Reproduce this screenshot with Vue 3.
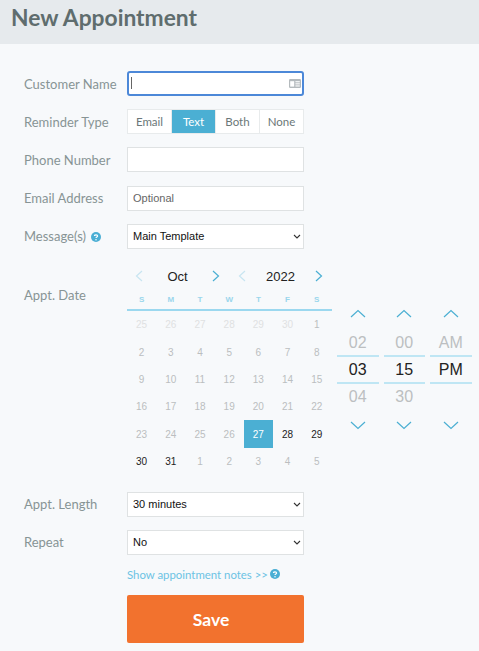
<script setup>
const dows = ['S', 'M', 'T', 'W', 'T', 'F', 'S']

// one flat list, 6 weeks. past = grey, off = next/prev month
const days = [
  [25, 'faint'], [26, 'faint'], [27, 'faint'], [28, 'faint'], [29, 'faint'], [30, 'faint'], [1, 'past'],
  [2, 'past'], [3, 'past'], [4, 'past'], [5, 'past'], [6, 'past'], [7, 'past'], [8, 'past'],
  [9, 'past'], [10, 'past'], [11, 'past'], [12, 'past'], [13, 'past'], [14, 'past'], [15, 'past'],
  [16, 'past'], [17, 'past'], [18, 'past'], [19, 'past'], [20, 'past'], [21, 'past'], [22, 'past'],
  [23, 'past'], [24, 'past'], [25, 'past'], [26, 'past'], [27, 'selected'], [28, 'open'], [29, 'open'],
  [30, 'open'], [31, 'open'], [1, 'past'], [2, 'past'], [3, 'past'], [4, 'past'], [5, 'past']
]

const spinners = [
  { top: '02', mid: '03', bottom: '04' },
  { top: '00', mid: '15', bottom: '30' },
  { top: 'AM', mid: 'PM', bottom: '\u00a0' }
]

const reminderTypes = ['Email', 'Text', 'Both', 'None']
</script>

<template>
  <div class="page">
    <header class="title-bar">
      <h1>New Appointment</h1>
    </header>

    <form class="form" @submit.prevent>
      <div class="row">
        <label>Customer Name</label>
        <div class="input-wrap">
          <input class="field focused" type="text" />
          <span class="caret"></span>
          <svg class="card-icon" viewBox="0 0 12 9" width="12" height="9">
            <rect x="0" y="0" width="12" height="9" rx="1.2" fill="#b4babd" />
            <rect x="1.2" y="2.2" width="4" height="5.4" fill="#fff" />
            <rect x="6.4" y="2.2" width="4.4" height="1.1" fill="#fff" />
            <rect x="6.4" y="4.3" width="4.4" height="1.1" fill="#fff" />
            <rect x="6.4" y="6.4" width="4.4" height="1.1" fill="#fff" />
          </svg>
        </div>
      </div>

      <div class="row">
        <label>Reminder Type</label>
        <div class="segments">
          <button
            v-for="t in reminderTypes"
            :key="t"
            type="button"
            :class="['segment', { active: t === 'Text' }]"
          >{{ t }}</button>
        </div>
      </div>

      <div class="row phone-row">
        <label>Phone Number</label>
        <input class="field" type="text" />
      </div>

      <div class="row lift">
        <label>Email Address</label>
        <input class="field" type="text" placeholder="Optional" />
      </div>

      <div class="row lift">
        <label>Message(s)
          <svg class="help" viewBox="0 0 10 10" width="10" height="10">
            <circle cx="5" cy="5" r="5" fill="#4aaed4" />
            <path d="M3.5 4 C3.5 2.4 6.6 2.4 6.6 4 C6.6 5 5 5 5 6.1" fill="none" stroke="#fff" stroke-width="1.2" />
            <circle cx="5" cy="7.7" r="0.75" fill="#fff" />
          </svg>
        </label>
        <select class="field select"><option>Main Template</option></select>
      </div>

      <div class="date-row">
        <label class="date-label">Appt. Date</label>
        <div class="calendar">
          <div class="cal-nav">
            <div class="nav-group month">
              <svg class="nav-arrow dim" viewBox="0 0 8 12" width="8" height="12"><path d="M7 1 L1.5 6 L7 11" /></svg>
              <span class="nav-value">Oct</span>
              <svg class="nav-arrow" viewBox="0 0 8 12" width="8" height="12"><path d="M1 1 L6.5 6 L1 11" /></svg>
            </div>
            <div class="nav-group year">
              <svg class="nav-arrow dim" viewBox="0 0 8 12" width="8" height="12"><path d="M7 1 L1.5 6 L7 11" /></svg>
              <span class="nav-value">2022</span>
              <svg class="nav-arrow" viewBox="0 0 8 12" width="8" height="12"><path d="M1 1 L6.5 6 L1 11" /></svg>
            </div>
          </div>
          <div class="dow-row">
            <span v-for="(d, i) in dows" :key="i">{{ d }}</span>
          </div>
          <div class="days">
            <span v-for="(d, i) in days" :key="i" :class="['day', d[1]]">{{ d[0] }}</span>
          </div>
        </div>

        <div class="spinners">
          <div v-for="(s, i) in spinners" :key="i" class="spinner">
            <svg class="spin-arrow" viewBox="0 0 16 9" width="16" height="9"><path d="M1 8 L8 1.5 L15 8" /></svg>
            <div class="spin-val muted above">{{ s.top }}</div>
            <div class="spin-val current">{{ s.mid }}</div>
            <div class="spin-val muted below">{{ s.bottom }}</div>
            <svg class="spin-arrow down" viewBox="0 0 16 9" width="16" height="9"><path d="M1 1 L8 7.5 L15 1" /></svg>
          </div>
        </div>
      </div>

      <div class="row lift">
        <label>Appt. Length</label>
        <select class="field select"><option>30 minutes</option></select>
      </div>

      <div class="row lift">
        <label>Repeat</label>
        <select class="field select"><option>No</option></select>
      </div>

      <div class="notes-row">
        <a class="notes-link">Show appointment notes &gt;&gt;</a>
        <svg class="help" viewBox="0 0 10 10" width="10" height="10">
          <circle cx="5" cy="5" r="5" fill="#4aaed4" />
          <path d="M3.5 4 C3.5 2.4 6.6 2.4 6.6 4 C6.6 5 5 5 5 6.1" fill="none" stroke="#fff" stroke-width="1.2" />
          <circle cx="5" cy="7.7" r="0.75" fill="#fff" />
        </svg>
      </div>

      <button class="save" type="submit">Save</button>
    </form>
  </div>
</template>

<style>
html, body {
  margin: 0;
  background: #f7f9fb;
}
</style>

<style scoped>
.page {
  width: 479px;
  height: 651px;
  overflow: hidden;
  background: #f7f9fb;
  font-family: Lato, "Open Sans", sans-serif;
}

.title-bar {
  height: 44px;
  background: #e6eaed;
  padding-left: 11px;
  box-sizing: border-box;
}

.title-bar h1 {
  margin: 0;
  font-size: 22.8px;
  line-height: 34px;
  font-weight: 700;
  color: #5f6d6e;
}

.form {
  padding: 27px 0 0 24px;
}

.row {
  display: flex;
  align-items: center;
  height: 25px;
  margin-bottom: 13px;
}

.phone-row {
  margin-bottom: 14px;
}

.row label,
.date-label {
  width: 103px;
  flex: none;
  font-size: 13px;
  color: #879495;
}

.field {
  width: 177px;
  height: 25px;
  box-sizing: border-box;
  border: 1px solid #dfe2e3;
  background-color: #fff;
  padding: 0 5px;
  font-family: "Liberation Sans", Arial, sans-serif;
  font-size: 11px;
  color: #111;
  border-radius: 0;
  outline: none;
}

/* text in these rows sits a pixel higher */
.lift label {
  padding-bottom: 2px;
}

.lift .field {
  padding-bottom: 2px;
}

.select {
  appearance: none;
  background-image: url("data:image/svg+xml,%3Csvg xmlns='http://www.w3.org/2000/svg' width='8' height='5'%3E%3Cpath d='M1 1l3 3 3-3' fill='none' stroke='%23333' stroke-width='1.1'/%3E%3C/svg%3E");
  background-repeat: no-repeat;
  background-position: right 2px center;
}

.field::placeholder {
  color: #666;
  opacity: 1;
}

.field.focused {
  border: 2px solid #4c88d8;
  border-radius: 3px;
}

.input-wrap {
  position: relative;
  width: 177px;
  height: 25px;
}

.caret {
  position: absolute;
  left: 4px;
  top: 6px;
  width: 1px;
  height: 12px;
  background: #666;
}

.card-icon {
  position: absolute;
  right: 3px;
  top: 8px;
}

.segments {
  display: flex;
  width: 177px;
  height: 25px;
  box-sizing: border-box;
  border: 1px solid #e8ebec;
  background: #fff;
}

.segment {
  flex: 1;
  border: 0;
  border-left: 1px solid #e8ebec;
  padding: 0;
  background: #fff;
  font-family: Lato, "Open Sans", sans-serif;
  font-size: 11.5px;
  color: #6b7778;
}

.segment:first-child {
  border-left: 0;
}

.segment.active {
  background: #4bafd3;
  color: #fff;
}

.help {
  vertical-align: -1px;
  margin-left: 2px;
}

.date-row {
  display: flex;
  height: 225px;
  margin-bottom: 5px;
}

.date-label {
  padding-top: 25px;
  line-height: 16px;
}

.calendar {
  width: 205px;
  flex: none;
}

.cal-nav {
  display: flex;
  gap: 18px;
  align-items: center;
  height: 16px;
  margin-top: 6px;
  padding-left: 8px;
}

.nav-group {
  display: flex;
  align-items: center;
}

.nav-value {
  width: 69px;
  text-align: center;
  font-family: "Liberation Sans", Arial, sans-serif;
  font-size: 13px;
  color: #222;
}

.nav-arrow {
  flex: none;
}

.nav-arrow path,
.spin-arrow path {
  fill: none;
  stroke: #4bafd3;
  stroke-width: 1.2;
}

.nav-arrow.dim path {
  stroke: #c8e5f1;
}

.dow-row {
  display: grid;
  grid-template-columns: repeat(7, 29.2px);
  margin-top: 9px;
  height: 16px;
  line-height: 14px;
  border-bottom: 2px solid #9bd8ef;
  text-align: center;
  font-family: "Liberation Sans", Arial, sans-serif;
  font-size: 8px;
  font-weight: 700;
  color: #9ad6ec;
}

.days {
  display: grid;
  grid-template-columns: repeat(7, 29.2px);
  grid-auto-rows: 27.35px;
  margin-top: 0;
}

.day {
  display: flex;
  align-items: center;
  justify-content: center;
  font-family: "Liberation Sans", Arial, sans-serif;
  font-size: 10px;
}

.day.faint { color: #dfe1e2; }
.day.past { color: #bbbec0; }
.day.open { color: #222; }

.day.selected {
  background: #4bafd3;
  color: #fff;
}

.spinners {
  display: flex;
  gap: 5px;
  margin-left: 5px;
  padding-top: 47px;
}

.spinner {
  width: 41.5px;
  display: flex;
  flex-direction: column;
  align-items: center;
}

.spin-arrow {
  height: 9px;
  margin-bottom: 9px;
}

.spin-arrow.down {
  margin: 10px 0 0;
}

.spin-val {
  width: 100%;
  height: 27.5px;
  line-height: 27px;
  text-align: center;
  font-family: "Liberation Sans", Arial, sans-serif;
  font-size: 16px;
}

.spin-val.muted { color: #bcbfc1; }
.spin-val.above { line-height: 32px; }
.spin-val.below { line-height: 26px; }

.spin-val.current {
  height: 29px;
  box-sizing: border-box;
  line-height: 25px;
  color: #222;
  border-top: 2px solid #bfe6f4;
  border-bottom: 2px solid #bfe6f4;
}

.notes-row {
  display: flex;
  align-items: center;
  margin: -2px 0 0 103px;
  height: 16px;
}

.notes-link {
  font-size: 11.4px;
  color: #6cc3e4;
}

.save {
  display: block;
  width: 177px;
  height: 48px;
  margin: 13px 0 0 103px;
  padding: 0 9px 0 0;
  border: 0;
  border-radius: 2px;
  background: #f2722e;
  color: #fff;
  font-family: Lato, "Open Sans", sans-serif;
  font-size: 17.5px;
  font-weight: 700;
}
</style>
